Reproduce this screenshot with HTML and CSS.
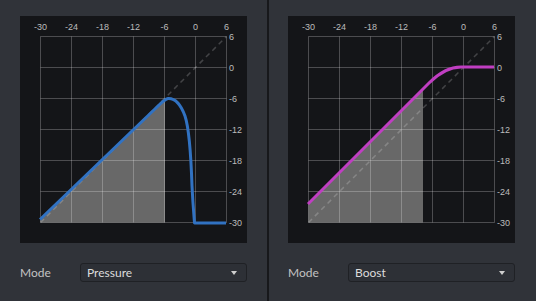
FILE: index.html
```html
<!DOCTYPE html>
<html lang="en">
<head>
  <meta charset="UTF-8">
  <title>Dynamics</title>
  <link rel="stylesheet" href="styles.css">
</head>
<body>
  <div class="app">
    <section class="panel">
      <div class="graph">
        <svg width="227" height="227" viewBox="0 0 227 227">
          <path class="fill" d="M20.5,206.5 L20.5,203.5 L137,91 L142,86 L145,83.5 L145,206.5 Z"/>
          <path class="grid" d="M20.5,20.5V206.5M51.5,20.5V206.5M82.5,20.5V206.5M113.5,20.5V206.5M144.5,20.5V206.5M175.5,20.5V206.5M206.5,20.5V206.5M20.5,20.5H206.5M20.5,51.5H206.5M20.5,82.5H206.5M20.5,113.5H206.5M20.5,144.5H206.5M20.5,175.5H206.5M20.5,206.5H206.5"/>
          <path class="unity" d="M20.5,206.5 L206.5,20.5"/>
          <path class="curve curve-blue" d="M20,203.5 L137,91 C142,86 145,83 148,82.5 C156,82 161,89 165,100 C169,112 171,140 172,170 C173,190 174,200 174.5,207 L206,207"/>
          <g class="axis-top">
            <text x="20.5" y="14">-30</text>
            <text x="51.5" y="14">-24</text>
            <text x="82.5" y="14">-18</text>
            <text x="113.5" y="14">-12</text>
            <text x="144.5" y="14">-6</text>
            <text x="175.5" y="14">0</text>
            <text x="206.5" y="14">6</text>
          </g>
          <g class="axis-right">
            <text x="209" y="23.5">6</text>
            <text x="209" y="54.5">0</text>
            <text x="209" y="85.5">-6</text>
            <text x="209" y="116.5">-12</text>
            <text x="209" y="147.5">-18</text>
            <text x="209" y="178.5">-24</text>
            <text x="209" y="209.5">-30</text>
          </g>
        </svg>
      </div>
      <div class="mode-row">
        <span class="mode-label">Mode</span>
        <div class="select">
          <span>Pressure</span>
          <span class="caret"></span>
        </div>
      </div>
    </section>
    <div class="divider"></div>
    <section class="panel panel-right">
      <div class="graph">
        <svg width="227" height="227" viewBox="0 0 227 227">
          <path class="fill" d="M20.5,206.5 L20.5,188 L135,73 L135,206.5 Z"/>
          <path class="grid" d="M20.5,20.5V206.5M51.5,20.5V206.5M82.5,20.5V206.5M113.5,20.5V206.5M144.5,20.5V206.5M175.5,20.5V206.5M206.5,20.5V206.5M20.5,20.5H206.5M20.5,51.5H206.5M20.5,82.5H206.5M20.5,113.5H206.5M20.5,144.5H206.5M20.5,175.5H206.5M20.5,206.5H206.5"/>
          <path class="unity" d="M20.5,206.5 L206.5,20.5"/>
          <path class="curve curve-pink" d="M20,188 L141,67 Q157,51 173,51 L206,51"/>
          <g class="axis-top">
            <text x="20.5" y="14">-30</text>
            <text x="51.5" y="14">-24</text>
            <text x="82.5" y="14">-18</text>
            <text x="113.5" y="14">-12</text>
            <text x="144.5" y="14">-6</text>
            <text x="175.5" y="14">0</text>
            <text x="206.5" y="14">6</text>
          </g>
          <g class="axis-right">
            <text x="209" y="23.5">6</text>
            <text x="209" y="54.5">0</text>
            <text x="209" y="85.5">-6</text>
            <text x="209" y="116.5">-12</text>
            <text x="209" y="147.5">-18</text>
            <text x="209" y="178.5">-24</text>
            <text x="209" y="209.5">-30</text>
          </g>
        </svg>
      </div>
      <div class="mode-row">
        <span class="mode-label">Mode</span>
        <div class="select">
          <span>Boost</span>
          <span class="caret"></span>
        </div>
      </div>
    </section>
  </div>
</body>
</html>
```

FILE: styles.css
```css
body{
  margin: 0;
  background-color: #303339;
  font-family: Lato, "Liberation Sans", sans-serif;
}
.app{
  display: flex;
  width: 536px;
  height: 301px;
}
.panel{
  width: 267px;
  padding: 16px 20px 0 20px;
  box-sizing: border-box;
}
.panel-right{
  padding-left: 19px;
  padding-right: 21px;
}
.divider{
  width: 2px;
  background-color: #17181b;
}

/*graph*/
.graph{
  width: 227px;
  height: 227px;
  background-color: #141518;
}
.graph svg{
  display: block;
}
.fill{
  fill: #686868;
}
.grid{
  fill: none;
  stroke: rgba(255,255,255,0.24);
  stroke-width: 1;
}
.unity{
  fill: none;
  stroke: rgba(255,255,255,0.2);
  stroke-width: 1.5;
  stroke-dasharray: 5 4;
}
.curve{
  fill: none;
  stroke-width: 3;
  stroke-linejoin: round;
}
.curve-blue{
  stroke: #3172c2;
}
.curve-pink{
  stroke: #c03ec2;
}
.axis-top text,
.axis-right text{
  font-family: "Liberation Sans", sans-serif;
  font-size: 9px;
  fill: #bcbcbc;
}
.axis-top text{
  text-anchor: middle;
}

/*mode row*/
.mode-row{
  display: flex;
  align-items: center;
  margin-top: 20px;
}
.mode-label{
  width: 60px;
  font-size: 12px;
  color: #c2c2c2;
}
.select{
  flex: 1;
  height: 19px;
  box-sizing: border-box;
  display: flex;
  align-items: center;
  justify-content: space-between;
  padding: 0 9px 0 6px;
  border: 1px solid #1f2125;
  border-radius: 3px;
  background-color: #2d3036;
  font-size: 12px;
  color: #dcdcdc;
}
.caret{
  width: 0;
  height: 0;
  border-left: 3px solid transparent;
  border-right: 3px solid transparent;
  border-top: 4px solid #cfcfcf;
}
```
